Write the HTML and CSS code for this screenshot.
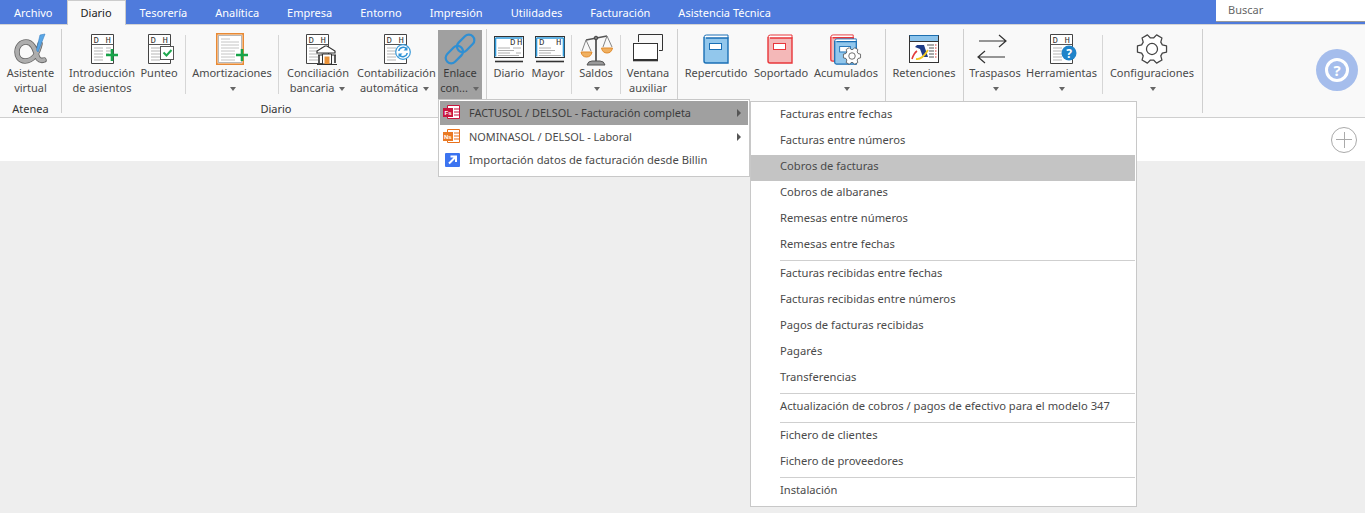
FILE: index.html
```html
<!DOCTYPE html>
<html lang="es">
<head>
<meta charset="utf-8">
<title>Diario</title>
<link rel="stylesheet" href="styles.css">
</head>
<body>
<svg class="defs" width="0" height="0" aria-hidden="true">
  <defs>
    <symbol id="doc" viewBox="0 0 23 30">
      <path d="M.5.5h22v29H.5z" fill="#fff" stroke="#444"/>
      <path d="M.5 10.5h22" stroke="#555" fill="none"/>
      <path d="M3 14h9M3 17h9M3 20h9M3 23h9M3 26h9M15 14h5M15 17h5M15 20h3" stroke="#b5b5b5"/>
      <text x="2.5" y="8.5" class="dh">D</text>
      <text x="14.5" y="8.5" class="dh">H</text>
    </symbol>
    <symbol id="book" viewBox="0 0 26 30">
      <path d="M3.500 1H25v3.500H3.500Q1.200 4.500 1.200 2.800 1.200 1 3.500 1z" fill="#fff" stroke="currentColor"/>
      <path d="M1 3v24q0 2 2 2h22V4H3" fill="var(--book-fill)" stroke="currentColor" stroke-width="1.400"/>
      <rect x="6.500" y="9.500" width="12" height="6" fill="#fff" stroke="currentColor"/>
    </symbol>
    <symbol id="gear" viewBox="0 0 32 32">
      <path d="M25.730 12.070 29.690 13.090V18.910L25.730 19.930 24.270 22.460 25.370 26.400 20.330 29.310 17.460 26.400H14.540L11.670 29.310 6.630 26.400 7.730 22.460 6.270 19.930 2.310 18.910V13.090L6.270 12.070 7.730 9.540 6.630 5.600 11.670 2.690 14.540 5.600H17.460L20.330 2.690 25.370 5.600 24.270 9.540z" fill="#fff" stroke="#444" stroke-width="1.200" stroke-linejoin="round"/>
      <circle cx="16" cy="16" r="5.200" fill="#fff" stroke="#444" stroke-width="1.200"/>
    </symbol>
  </defs>
</svg>

<nav class="tabs">
  <span class="tab">Archivo</span>
  <span class="tab tab-active">Diario</span>
  <span class="tab">Tesorería</span>
  <span class="tab">Analítica</span>
  <span class="tab">Empresa</span>
  <span class="tab">Entorno</span>
  <span class="tab">Impresión</span>
  <span class="tab">Utilidades</span>
  <span class="tab">Facturación</span>
  <span class="tab">Asistencia Técnica</span>
  <div class="search">Buscar</div>
</nav>

<section class="ribbon">
  <div class="group g-atenea">
    <div class="row">
      <div class="btn w61">
        <svg class="ico" viewBox="0 0 40 34">
          <path class="alpha-o" d="M29 12C27 21 22 29 14 29 8 29 6 24 6 20 6 14 10 10 15 10 22 10 24 18 26 24 27 28 30 29 33 28"/>
          <path class="alpha-i" d="M29 12C27 21 22 29 14 29 8 29 6 24 6 20 6 14 10 10 15 10 22 10 24 18 26 24 27 28 30 29 33 28"/>
          <path d="M29 3 34 2 27 20 25.500 18z" fill="#5aa7e6" stroke="#3b82c4" stroke-width=".6"/>
        </svg>
        <div class="lbl">Asistente<br>virtual</div>
      </div>
    </div>
    <div class="glabel">Atenea</div>
  </div>

  <div class="group g-diario">
    <div class="row">
      <div class="btn w72">
        <svg class="ico" viewBox="0 0 40 34">
          <use href="#doc" x="9" y="2" width="23" height="30"/>
          <path d="M30 17v12M24 23h12" stroke="#17a44a" stroke-width="2.600"/>
        </svg>
        <div class="lbl">Introducción<br>de asientos</div>
      </div>
      <div class="btn w42">
        <svg class="ico" viewBox="0 0 40 34">
          <use href="#doc" x="9" y="2" width="23" height="30"/>
          <rect x="21.500" y="14.500" width="13" height="13" fill="#fff" stroke="#555"/>
          <path d="M24.500 20.500l3 3 5-5.500" fill="none" stroke="#1fa84f" stroke-width="2"/>
        </svg>
        <div class="lbl">Punteo</div>
      </div>
      <i class="sep s5"></i>
      <div class="btn w92">
        <svg class="ico" viewBox="0 0 40 34">
          <rect x="4.800" y="1.800" width="26.400" height="30.400" fill="#fff" stroke="#e88a35" stroke-width="1.600"/>
          <rect x="6.500" y="3.500" width="23" height="27" fill="#fff" stroke="#b8b8b8"/>
          <path d="M9 7h9M9 10h18M9 13h18M9 16h18M9 19h14M9 22h14M9 25h14M9 28h14" stroke="#c4c4c4"/>
          <path d="M30 17v12M24 23h12" stroke="#17a44a" stroke-width="2.600"/>
        </svg>
        <div class="lbl">Amortizaciones<br><b class="caret"></b></div>
      </div>
      <i class="sep"></i>
      <div class="btn w78">
        <svg class="ico" viewBox="0 0 40 34">
          <use href="#doc" x="8" y="2" width="23" height="30"/>
          <path d="M27 14h2l8 5v2H19v-2z" fill="#fff" stroke="#333" stroke-width="1.200"/>
          <path d="M20 23h18M19 32.500h20" stroke="#333" stroke-width="1.200"/>
          <path d="M21 23v8M37 23v8" stroke="#333" stroke-width="1.600"/>
          <path d="M24.500 22h9v10h-9z" fill="#fff" stroke="#333"/>
          <path d="M26.500 24.500h5V32h-5z" fill="#e8923a"/>
        </svg>
        <div class="lbl">Conciliación<br>bancaria <b class="caret"></b></div>
      </div>
      <div class="btn w76">
        <svg class="ico" viewBox="0 0 40 34">
          <use href="#doc" x="9" y="2" width="23" height="30"/>
          <circle cx="28" cy="20" r="7.300" fill="#fff" stroke="#3a9ad9" stroke-width="1.200"/>
          <path d="M23.800 19a4.400 4.400 0 0 1 7.800-2M32.200 21a4.400 4.400 0 0 1-7.800 2" fill="none" stroke="#2f93d6" stroke-width="1.500"/>
          <path d="M32.500 14.500v4h-4zM23.500 25.500v-4h4z" fill="#2f93d6"/>
        </svg>
        <div class="lbl">Contabilización<br>automática <b class="caret"></b></div>
      </div>
      <div class="btn w44 btn-open">
        <svg class="ico" viewBox="0 0 40 34">
          <g fill="none" stroke="#2f8fd3" stroke-width="2.200" transform="rotate(-45 20 17)">
            <rect x="2" y="11.500" width="20" height="11" rx="5.500"/>
            <rect x="18" y="11.500" width="20" height="11" rx="5.500"/>
          </g>
        </svg>
        <div class="lbl">Enlace<br>con... <b class="caret"></b></div>
      </div>
    </div>
    <div class="glabel">Diario</div>
  </div>

  <div class="group g-libros">
    <div class="row">
      <div class="btn w42">
        <svg class="ico" viewBox="0 0 40 34">
          <rect x="5.500" y="4.500" width="29" height="21" fill="#fff" stroke="#333"/>
          <path d="M6.500 6v18.500M6.500 6h27" stroke="#2f9bdc" stroke-width="1.600" fill="none"/>
          <text x="21" y="13" class="dh">D</text><text x="28" y="13" class="dh">H</text>
          <path d="M9 16h12M9 18.500h16M9 21h12M9 23.500h21M24 16h8M27 21h5" stroke="#b0b0b0"/>
          <path d="M6 29.500h28" stroke="#333" stroke-width="1.600"/>
        </svg>
        <div class="lbl">Diario</div>
      </div>
      <div class="btn w36">
        <svg class="ico" viewBox="0 0 40 34">
          <rect x="5.500" y="4.500" width="29" height="21" fill="#fff" stroke="#333"/>
          <path d="M6.500 6v18.500M6.500 6h27M33.500 6v18.500" stroke="#2f9bdc" stroke-width="1.600" fill="none"/>
          <text x="9" y="13" class="dh">D</text><text x="26" y="13" class="dh">H</text>
          <path d="M9 16h12M9 18.500h16M9 21h12M9 23.500h22" stroke="#b0b0b0"/>
          <path d="M6 29.500h28" stroke="#333" stroke-width="1.600"/>
        </svg>
        <div class="lbl">Mayor</div>
      </div>
      <i class="sep s5"></i>
      <div class="btn w48">
        <svg class="ico" viewBox="0 0 40 34">
          <path d="M10 8 31 4" stroke="#555" stroke-width="1.400"/>
          <path d="M20 5v24" stroke="#555" stroke-width="1.800"/>
          <circle cx="20" cy="6" r="1.800" fill="#777" stroke="#444"/>
          <path d="M10 8 6 19M10 8l5 11M31 4l-4 11M31 4l5 11" stroke="#777" fill="none" stroke-width=".9"/>
          <path d="M5 20h11q-1 5-5.500 5T5 20z" fill="#f0b060" stroke="#e08a2c"/>
          <path d="M25.500 16h11q-1 5-5.500 5t-5.500-5z" fill="#f0b060" stroke="#e08a2c"/>
          <path d="M11 33q1-4 5-4h8q4 0 5 4z" fill="#999" stroke="#555"/>
        </svg>
        <div class="lbl">Saldos<br><b class="caret"></b></div>
      </div>
      <i class="sep"></i>
      <div class="btn w54">
        <svg class="ico" viewBox="0 0 40 34">
          <path d="M10.500 10V2.500h24V18.500H31" fill="none" stroke="#333"/>
          <rect x="5.500" y="11.500" width="24" height="16" fill="#fff" stroke="#333"/>
          <path d="M5 28.500h25" stroke="#333" stroke-width="1.600"/>
        </svg>
        <div class="lbl">Ventana<br>auxiliar</div>
      </div>
    </div>
  </div>

  <div class="group g-iva">
    <div class="row">
      <div class="btn w76">
        <svg class="ico book-blue" viewBox="0 0 40 34"><use href="#book" x="7" y="2" width="26" height="30"/></svg>
        <div class="lbl">Repercutido</div>
      </div>
      <div class="btn w54">
        <svg class="ico book-red" viewBox="0 0 40 34"><use href="#book" x="6" y="2" width="26" height="30"/></svg>
        <div class="lbl">Soportado</div>
      </div>
      <div class="btn w76">
        <svg class="ico" viewBox="0 0 40 34">
          <use href="#book" class="book-red" x="3" y="2" width="26" height="28"/>
          <use href="#book" class="book-blue" x="7" y="6" width="25" height="27"/>
          <use href="#gear" x="16" y="14" width="20" height="20"/>
        </svg>
        <div class="lbl">Acumulados<br><b class="caret"></b></div>
      </div>
    </div>
  </div>

  <div class="group g-ret">
    <div class="row">
      <div class="btn w76">
        <svg class="ico" viewBox="0 0 40 34">
          <rect x="5.500" y="3.500" width="29" height="27" fill="#fff" stroke="#333"/>
          <rect x="6" y="4" width="28" height="5" fill="#8cc4ec"/>
          <path d="M5.500 3.500h29" stroke="#1d6fb0"/>
          <path d="M5.500 9.500h29" stroke="#333"/>
          <path d="M13 13h7l4 12h-5l-3-8-5-2z" fill="#1f3c88"/>
          <path d="M8 27q2-6 5-8" fill="none" stroke="#e23b3b" stroke-width="1.600"/>
          <path d="M12 27q6 1 12-9" fill="none" stroke="#f2c81e" stroke-width="1.800"/>
          <path d="M23 13h7M25 16h5M25 19h5M25 22h5M25 25h5" stroke="#555"/>
          <path d="M31 13h2M31 16h2M31 19h2M31 22h2M31 25h2" stroke="#d33" stroke-dasharray="1 .5"/>
        </svg>
        <div class="lbl">Retenciones</div>
      </div>
    </div>
  </div>

  <div class="group g-tools">
    <div class="row">
      <div class="btn w62">
        <svg class="ico" viewBox="0 0 40 34">
          <path d="M4 9h27M24 3l7 6-7 6" fill="none" stroke="#333" stroke-width="1.200"/>
          <path d="M30 25H3M10 19l-7 6 7 6" fill="none" stroke="#333" stroke-width="1.200"/>
        </svg>
        <div class="lbl">Traspasos<br><b class="caret"></b></div>
      </div>
      <div class="btn w70">
        <svg class="ico" viewBox="0 0 40 34">
          <use href="#doc" x="9" y="2" width="23" height="30"/>
          <circle cx="28" cy="21" r="7.500" fill="#1f83c9"/>
          <text x="28" y="25.500" class="qm">?</text>
        </svg>
        <div class="lbl">Herramientas<br><b class="caret"></b></div>
      </div>
      <i class="sep s6"></i>
      <div class="btn w98">
        <svg class="ico" viewBox="0 0 40 34"><use href="#gear" x="3" y="0" width="34" height="34"/></svg>
        <div class="lbl">Configuraciones<br><b class="caret"></b></div>
      </div>
    </div>
  </div>

  <div class="help">?</div>
</section>

<div class="docbar">
  <div class="addtab"></div>
</div>
<main class="canvas"></main>

<div class="menu menu-link">
  <div class="mi mi-on">
    <svg class="mico" viewBox="0 0 18 16">
      <path d="M4.500 1.500h12v13h-12z" fill="#fff" stroke="#c8173f"/>
      <path d="M11 5h5M11 8h5M11 11h5" stroke="#c8173f" stroke-width="1.200"/>
      <rect x="0" y="4" width="10" height="9" fill="#c8173f"/>
      <text x="1.500" y="11" class="mtag">Fs</text>
    </svg>
    <span>FACTUSOL / DELSOL - Facturación completa</span><b class="arrow"></b>
  </div>
  <div class="mi">
    <svg class="mico" viewBox="0 0 18 16">
      <path d="M4.500 1.500h12v13h-12z" fill="#fff" stroke="#e8711c"/>
      <path d="M11 5h5M11 8h5M11 11h5" stroke="#e8711c" stroke-width="1.200"/>
      <rect x="0" y="4" width="10" height="9" fill="#ea7a24"/>
      <text x="1" y="11" class="mtag">Ns</text>
    </svg>
    <span>NOMINASOL / DELSOL - Laboral</span><b class="arrow"></b>
  </div>
  <div class="mi mi-last">
    <svg class="mico" viewBox="0 0 18 16">
      <rect x="2" y="1" width="15" height="14" rx="1" fill="#3c74f0"/>
      <path d="M6 11.500 12.500 5M7.500 4.500h5.500V10" fill="none" stroke="#fff" stroke-width="2"/>
    </svg>
    <span>Importación datos de facturación desde Billin</span>
  </div>
</div>

<div class="menu menu-sub">
  <div class="si">Facturas entre fechas</div>
  <div class="si">Facturas entre números</div>
  <div class="si si-on">Cobros de facturas</div>
  <div class="si">Cobros de albaranes</div>
  <div class="si">Remesas entre números</div>
  <div class="si">Remesas entre fechas</div>
  <hr class="div">
  <div class="si">Facturas recibidas entre fechas</div>
  <div class="si">Facturas recibidas entre números</div>
  <div class="si">Pagos de facturas recibidas</div>
  <div class="si">Pagarés</div>
  <div class="si">Transferencias</div>
  <hr class="div">
  <div class="si">Actualización de cobros / pagos de efectivo para el modelo 347</div>
  <hr class="div">
  <div class="si">Fichero de clientes</div>
  <div class="si">Fichero de proveedores</div>
  <hr class="div">
  <div class="si">Instalación</div>
</div>
</body>
</html>
```
FILE: styles.css
```css
* { box-sizing: border-box; }
html, body { margin: 0; height: 100%; }
body {
  display: flex;
  flex-direction: column;
  height: 513px;
  overflow: hidden;
  position: relative;
  font: 11px/15px "Noto Sans", "Open Sans", sans-serif;
  color: #4a4a4a;
  background: #eee;
}
.defs { position: absolute; }

.tabs {
  display: flex;
  flex: none;
  height: 25px;
  background: #4f7bdc;
  border-bottom: 1px solid #d4d4d4;
  color: #fff;
}
.tab { padding: 0 14px; line-height: 25px; white-space: nowrap; }
.tab-active {
  height: 25px;
  background: #f9f9f9;
  color: #222;
  border: 1px solid #ccc;
  border-width: 1px 1px 0;
  padding: 0 13px;
  line-height: 23px;
}
.search {
  margin-left: auto;
  width: 149px;
  height: 22px;
  background: #fff;
  color: #666;
  padding-left: 12px;
  line-height: 19px;
  border-bottom: 1px solid #999;
}

.ribbon {
  display: flex;
  flex: none;
  height: 93px;
  background: #f9f9f9;
  border-bottom: 1px solid #cfcfcf;
}
.group {
  display: flex;
  flex-direction: column;
  height: 84px;
  margin-top: 4px;
  border-right: 1px solid #cfcfcf;
}
.g-atenea { width: 62px; }
.g-diario { width: 425px; padding-left: 4px; }
.g-libros { width: 191px; padding-left: 1px; }
.g-iva { width: 208px; }
.g-ret { width: 78px; }
.g-tools { width: 239px; }
.row { display: flex; height: 70px; margin-top: 1px; flex: none; }
.glabel { text-align: center; line-height: 18px; height: 13px; color: #333; }

.btn { flex: none; text-align: center; white-space: nowrap; padding-top: 2px; }
.lbl { line-height: 15px; margin-top: -1px; }
.ico { display: block; width: 40px; height: 34px; margin: 0 auto; overflow: visible; }
.btn-open { background: #a0a0a0; margin-left: 5px; color: #3a3a3a; }

.w36 { width: 36px; } .w42 { width: 42px; } .w44 { width: 44px; } .w48 { width: 48px; }
.w54 { width: 54px; } .w61 { width: 61px; } .w62 { width: 62px; } .w70 { width: 70px; }
.w72 { width: 72px; } .w76 { width: 76px; } .w78 { width: 78px; } .w92 { width: 92px; }
.w98 { width: 98px; }

.sep { flex: none; width: 1px; height: 59px; margin-top: 5px; background: #d6d6d6; }
.s5 { margin-left: 5px; }
.s6 { margin-left: 6px; }

.caret {
  display: inline-block;
  vertical-align: middle;
  margin: 0 1px 0 2px;
  width: 0;
  height: 0;
  border: 3.500px solid transparent;
  border-top: 4px solid #666;
  border-bottom: 0;
}

.dh { font: 9px "Liberation Mono", monospace; fill: #333; }
.qm { font: bold 12px "Noto Sans", sans-serif; fill: #fff; text-anchor: middle; }
.mtag { font: bold 6px "Liberation Sans", sans-serif; fill: #fff; }
.alpha-o { fill: none; stroke: #666; stroke-width: 5.500; stroke-linecap: round; }
.alpha-i { fill: none; stroke: #adadad; stroke-width: 3.800; stroke-linecap: round; }

.book-blue { color: #1a6fb5; --book-fill: #92c7ec; }
.book-red { color: #e8363a; --book-fill: #f4b8b8; }

.help {
  flex: none;
  align-self: flex-start;
  margin: 24px 7px 0 auto;
  width: 42px;
  height: 42px;
  border-radius: 50%;
  background: #a5bdec;
  color: #fff;
  font: bold 15px/42px "Noto Sans", sans-serif;
  text-align: center;
  position: relative;
}
.help::before {
  content: "";
  position: absolute;
  inset: 9px;
  border: 3px solid #fff;
  border-radius: 50%;
}

.docbar {
  flex: none;
  height: 43px;
  background: #fff;
  display: flex;
  justify-content: flex-end;
  align-items: center;
  padding-right: 8px;
}
.addtab {
  width: 26px;
  height: 26px;
  border: 1px solid #aaa;
  border-radius: 50%;
  background:
    linear-gradient(#aaa, #aaa) center / 16px 1px no-repeat,
    linear-gradient(#aaa, #aaa) center / 1px 16px no-repeat,
    #fff;
}
.canvas { flex: 1; background: #eee; }

.menu {
  position: absolute;
  background: #fff;
  border: 1px solid #c8c8c8;
}
.menu-link { left: 438px; top: 99px; width: 312px; height: 78px; padding: 1px; font-size: 10.900px; }
.mi {
  display: flex;
  align-items: center;
  height: 24px;
  padding: 0 0 2px 3px;
  position: relative;
}
.mi-last { height: 23px; font-size: 11.200px; }
.mi-on { background: #a0a0a0; color: #3c3c3c; }
.mico { width: 18px; height: 16px; flex: none; margin-right: 8px; }
.arrow {
  position: absolute;
  right: 7px;
  top: 8px;
  border: 4px solid transparent;
  border-left: 4px solid #555;
  border-right: 0;
}
.menu-sub {
  left: 750px;
  top: 101px;
  width: 387px;
  height: 406px;
  padding: 1px 1px 1px 0;
  font-size: 11.200px;
}
.si { height: 26px; line-height: 22px; padding-left: 29px; white-space: nowrap; }
.si-on { background: #c4c4c4; }
.div { height: 1px; margin: 1px 0 1px 29px; border: 0; background: #cfcfcf; }
```
